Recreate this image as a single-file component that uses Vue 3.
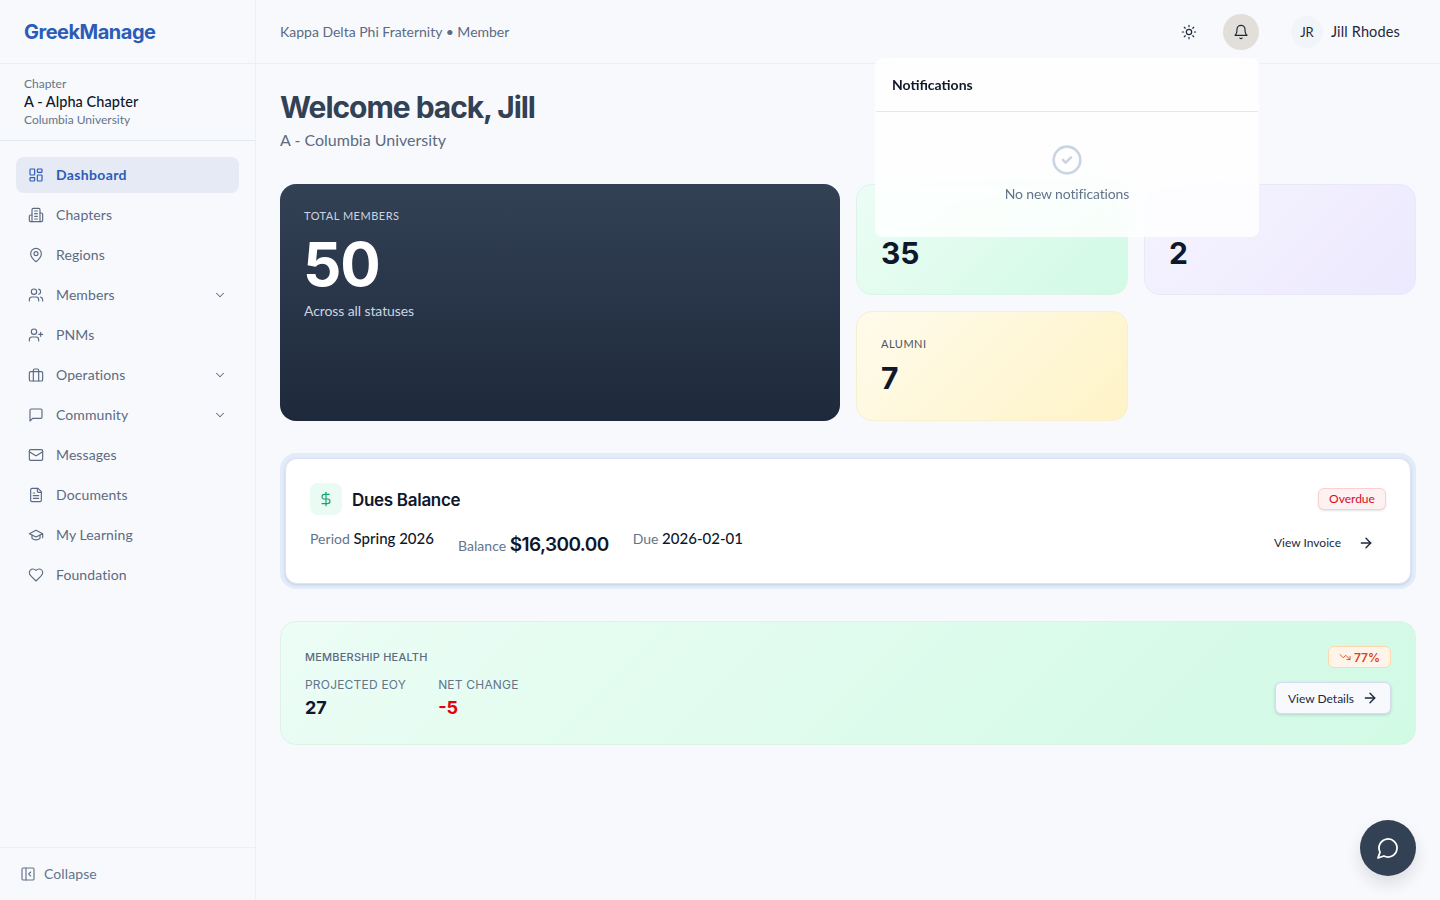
<script setup>
const icons = {
  dashboard: '<rect x="3" y="3" width="7" height="9" rx="1"/><rect x="14" y="3" width="7" height="5" rx="1"/><rect x="14" y="12" width="7" height="9" rx="1"/><rect x="3" y="16" width="7" height="5" rx="1"/>',
  building: '<path d="M6 22V4a2 2 0 0 1 2-2h8a2 2 0 0 1 2 2v18Z"/><path d="M6 12H4a2 2 0 0 0-2 2v6a2 2 0 0 0 2 2h2"/><path d="M18 9h2a2 2 0 0 1 2 2v9a2 2 0 0 1-2 2h-2"/><path d="M10 6h4M10 10h4M10 14h4M10 18h4"/>',
  pin: '<path d="M20 10c0 6-8 12-8 12s-8-6-8-12a8 8 0 0 1 16 0Z"/><circle cx="12" cy="10" r="3"/>',
  users: '<path d="M16 21v-2a4 4 0 0 0-4-4H6a4 4 0 0 0-4 4v2"/><circle cx="9" cy="7" r="4"/><path d="M22 21v-2a4 4 0 0 0-3-3.87"/><path d="M16 3.13a4 4 0 0 1 0 7.75"/>',
  userPlus: '<path d="M16 21v-2a4 4 0 0 0-4-4H6a4 4 0 0 0-4 4v2"/><circle cx="9" cy="7" r="4"/><path d="M19 8v6M22 11h-6"/>',
  briefcase: '<rect x="2" y="7" width="20" height="14" rx="2"/><path d="M16 21V5a2 2 0 0 0-2-2h-4a2 2 0 0 0-2 2v16"/>',
  square: '<path d="M21 15a2 2 0 0 1-2 2H7l-4 4V5a2 2 0 0 1 2-2h14a2 2 0 0 1 2 2z"/>',
  mail: '<rect x="2" y="4" width="20" height="16" rx="2"/><path d="m22 7-8.97 5.7a1.94 1.94 0 0 1-2.06 0L2 7"/>',
  file: '<path d="M15 2H6a2 2 0 0 0-2 2v16a2 2 0 0 0 2 2h12a2 2 0 0 0 2-2V7Z"/><path d="M14 2v4a2 2 0 0 0 2 2h4"/><path d="M10 9H8M16 13H8M16 17H8"/>',
  cap: '<path d="M22 10v6M2 10l10-5 10 5-10 5z"/><path d="M6 12v5c3 3 9 3 12 0v-5"/>',
  heart: '<path d="M19 14c1.49-1.46 3-3.21 3-5.5A5.5 5.5 0 0 0 16.5 3c-1.76 0-3 .5-4.5 2-1.5-1.5-2.74-2-4.5-2A5.5 5.5 0 0 0 2 8.5c0 2.3 1.5 4.05 3 5.5l7 7Z"/>',
  chevron: '<path d="m6 9 6 6 6-6"/>',
  collapse: '<rect x="3" y="3" width="18" height="18" rx="2"/><path d="M9 3v18"/><path d="m16 15-3-3 3-3"/>',
  sun: '<circle cx="12" cy="12" r="4"/><path d="M12 2v2M12 20v2m-7.07-17.07 1.41 1.41m11.32 11.32 1.41 1.41M2 12h2M20 12h2M6.34 17.66l-1.41 1.41M19.07 4.93l-1.41 1.41"/>',
  bell: '<path d="M6 8a6 6 0 0 1 12 0c0 7 3 9 3 9H3s3-2 3-9"/><path d="M10.3 21a1.94 1.94 0 0 0 3.4 0"/>',
  check: '<circle cx="12" cy="12" r="10"/><path d="m9 12 2 2 4-4"/>',
  dollar: '<path d="M12 2v20"/><path d="M17 5H9.5a3.5 3.5 0 0 0 0 7h5a3.5 3.5 0 0 1 0 7H6"/>',
  arrow: '<path d="M5 12h14"/><path d="m12 5 7 7-7 7"/>',
  trend: '<path d="m22 17-8.5-8.5-5 5L2 7"/><path d="M16 17h6v-6"/>',
  bubble: '<path d="M7.9 20A9 9 0 1 0 4 16.1L2 22Z"/>'
}
const nav = [
  { label: 'Dashboard', icon: 'dashboard', active: true },
  { label: 'Chapters', icon: 'building' },
  { label: 'Regions', icon: 'pin' },
  { label: 'Members', icon: 'users', more: true },
  { label: 'PNMs', icon: 'userPlus' },
  { label: 'Operations', icon: 'briefcase', more: true },
  { label: 'Community', icon: 'square', more: true },
  { label: 'Messages', icon: 'mail' },
  { label: 'Documents', icon: 'file' },
  { label: 'My Learning', icon: 'cap' },
  { label: 'Foundation', icon: 'heart' }
]
</script>

<template>
  <div class="app">
    <aside class="sidebar">
      <div class="logo">GreekManage</div>
      <div class="chapter">
        <div class="chapter-sub">Chapter</div>
        <div class="chapter-name">A - Alpha Chapter</div>
        <div class="chapter-sub">Columbia University</div>
      </div>
      <nav class="nav">
        <a v-for="item in nav" :key="item.label" class="nav-item" :class="{ active: item.active }">
          <svg class="ic16" viewBox="0 0 24 24" v-html="icons[item.icon]"></svg>
          <span class="nav-label">{{ item.label }}</span>
          <svg v-if="item.more" class="ic16 chev" viewBox="0 0 24 24" v-html="icons.chevron"></svg>
        </a>
      </nav>
      <div class="collapse">
        <svg class="ic16" viewBox="0 0 24 24" v-html="icons.collapse"></svg>
        <span class="collapse-label">Collapse</span>
      </div>
    </aside>

    <div class="page">
      <header class="topbar">
        <div class="crumb">Kappa Delta Phi Fraternity • Member</div>
        <div class="actions">
          <button class="round">
            <svg class="ic16 dark" viewBox="0 0 24 24" v-html="icons.sun"></svg>
          </button>
          <div class="bell-wrap">
            <button class="round open">
              <svg class="ic16 dark" viewBox="0 0 24 24" v-html="icons.bell"></svg>
            </button>
            <div class="popup">
              <div class="popup-head">Notifications</div>
              <div class="popup-body">
                <svg class="ic-check" viewBox="0 0 24 24" v-html="icons.check"></svg>
                <div class="popup-text">No new notifications</div>
              </div>
            </div>
          </div>
          <div class="user">
            <span class="avatar">JR</span>
            <span class="user-name">Jill Rhodes</span>
          </div>
        </div>
      </header>

      <main class="main">
        <h1 class="title">Welcome back, Jill</h1>
        <p class="subtitle">A - Columbia University</p>

        <section class="stats">
          <div class="stat total">
            <div class="stat-label light">TOTAL MEMBERS</div>
            <div class="total-num">50</div>
            <div class="total-note">Across all statuses</div>
          </div>
          <div class="stat green">
            <div class="stat-label"></div>
            <div class="stat-num">35</div>
          </div>
          <div class="stat purple">
            <div class="stat-label"></div>
            <div class="stat-num">2</div>
          </div>
          <div class="stat yellow">
            <div class="stat-label">ALUMNI</div>
            <div class="stat-num">7</div>
          </div>
        </section>

        <section class="dues-ring">
          <div class="dues">
            <div class="dues-top">
              <span class="dollar">
                <svg class="ic16" viewBox="0 0 24 24" v-html="icons.dollar"></svg>
              </span>
              <h2 class="dues-title">Dues Balance</h2>
              <span class="overdue"><span class="overdue-text">Overdue</span></span>
            </div>
            <div class="dues-row">
              <div class="dues-cell"><span class="muted">Period</span> <span class="val">Spring 2026</span></div>
              <div class="dues-cell balance"><span class="muted">Balance</span> <span class="amount">$16,300.00</span></div>
              <div class="dues-cell"><span class="muted">Due</span> <span class="val">2026-02-01</span></div>
              <a class="invoice">
                <span>View Invoice</span>
                <svg class="ic16 dark arrow" viewBox="0 0 24 24" v-html="icons.arrow"></svg>
              </a>
            </div>
          </div>
        </section>

        <section class="health">
          <div class="health-left">
            <div class="health-title">MEMBERSHIP HEALTH</div>
            <div class="health-cols">
              <div>
                <div class="health-label">PROJECTED EOY</div>
                <div class="health-num">27</div>
              </div>
              <div>
                <div class="health-label">NET CHANGE</div>
                <div class="health-num red">-5</div>
              </div>
            </div>
          </div>
          <div class="health-right">
            <span class="pct">
              <svg class="ic12" viewBox="0 0 24 24" v-html="icons.trend"></svg>
              77%
            </span>
            <button class="details">
              <span>View Details</span>
              <svg class="ic16 dark arrow" viewBox="0 0 24 24" v-html="icons.arrow"></svg>
            </button>
          </div>
        </section>
      </main>
    </div>

    <button class="fab">
      <svg class="ic-fab" viewBox="0 0 24 24" v-html="icons.bubble"></svg>
    </button>
  </div>
</template>

<style>
html, body { margin: 0; background: #f8fafc; }
</style>

<style scoped>
.app {
  display: flex;
  height: 900px;
  overflow: hidden;
  background: #f8f9fc;
  color: #0f172a;
  font-family: Lato, "Noto Sans", sans-serif;
}
svg { fill: none; stroke: currentColor; stroke-width: 1.75; stroke-linecap: round; stroke-linejoin: round; flex: none; }
.ic16 { width: 16px; height: 16px; }
.ic12 { width: 12px; height: 12px; }
.dark { color: #1e293b; }
.arrow { stroke-width: 2.1; }

.sidebar {
  width: 256px;
  flex: none;
  box-sizing: border-box;
  border-right: 1px solid #eceff5;
  display: flex;
  flex-direction: column;
}
.logo {
  height: 64px;
  box-sizing: border-box;
  padding-left: 24px;
  display: flex;
  align-items: center;
  border-bottom: 1px solid #e9edf4;
  color: #2b5cb8;
  font: 700 20px Inter, sans-serif;
  letter-spacing: -0.5px;
}
.chapter {
  height: 77px;
  box-sizing: border-box;
  padding: 12px 24px 0;
  border-bottom: 1px solid #e2e8f0;
}
.chapter-sub { font-size: 12px; line-height: 16px; color: #64748b; }
.chapter-name { font-size: 14.5px; line-height: 20px; font-weight: 500; color: #0f172a; letter-spacing: 0.05px; }
.nav { flex: 1; padding: 16px 16px 0; display: flex; flex-direction: column; gap: 4px; }
.nav-item {
  height: 36px;
  border-radius: 8px;
  padding: 0 12px;
  display: flex;
  align-items: center;
  gap: 12px;
  font-size: 14px;
  color: #5b6b82;
  letter-spacing: 0.1px;
}
.nav-item.active { background: #e5eaf5; color: #2b5cb8; font-weight: 700; letter-spacing: 0.35px; }
.nav-label { flex: 1; padding-bottom: 2px; }
.chev { width: 14px; height: 14px; }
.collapse {
  height: 53px;
  box-sizing: border-box;
  border-top: 1px solid #eceff5;
  padding-left: 20px;
  display: flex;
  align-items: center;
  gap: 8px;
  font-size: 14px;
  color: #64748b;
  letter-spacing: 0.1px;
}
.collapse-label { padding-bottom: 2px; }

.page { flex: 1; min-width: 0; display: flex; flex-direction: column; }
.topbar {
  height: 64px;
  flex: none;
  box-sizing: border-box;
  border-bottom: 1px solid #eceff5;
  padding: 0 40px 0 24px;
  display: flex;
  align-items: center;
  justify-content: space-between;
}
.crumb { font-size: 14px; color: #5b6b82; }
.actions { display: flex; align-items: center; gap: 16px; }
.round {
  width: 36px;
  height: 36px;
  padding: 0;
  border: 0;
  border-radius: 50%;
  background: transparent;
  display: flex;
  align-items: center;
  justify-content: center;
}
.round.open { background: #e2dfdb; }
.bell-wrap { position: relative; margin-right: 16px; }
.popup {
  position: absolute;
  top: 44px;
  right: 0;
  width: 384px;
  height: 179px;
  border-radius: 8px;
  background: rgba(255, 255, 255, 0.82);
  backdrop-filter: blur(12px);
  z-index: 10;
}
.popup-head {
  height: 54px;
  box-sizing: border-box;
  margin: 0 1px;
  padding-left: 16px;
  display: flex;
  align-items: center;
  border-bottom: 1px solid #e2e8f0;
  font-size: 14px;
  font-weight: 700;
  color: #0f172a;
}
.popup-body {
  padding-top: 32px;
  display: flex;
  flex-direction: column;
  align-items: center;
  gap: 9px;
  font-size: 14px;
  color: #64748b;
}
.popup-text { letter-spacing: -0.15px; }
.ic-check { width: 32px; height: 32px; color: #cbd5e1; stroke-width: 2; }
.user { display: flex; align-items: center; gap: 8px; }
.avatar {
  width: 32px;
  height: 32px;
  border-radius: 50%;
  background: #f1f5f9;
  display: flex;
  align-items: center;
  justify-content: center;
  font-size: 13px;
  color: #1e293b;
}
.user-name { font-size: 14.5px; color: #1e293b; min-width: 69px; letter-spacing: 0.15px; }

.main { flex: 1; padding: 24px; min-height: 0; }
.title {
  margin: 0;
  font: 700 30px/38px Inter, sans-serif;
  letter-spacing: -1.05px;
  color: #334155;
}
.subtitle { margin: 2px 0 0; font-size: 16px; line-height: 24px; color: #5b6b82; }

.stats {
  margin-top: 32px;
  display: grid;
  grid-template-columns: repeat(4, 1fr);
  grid-template-rows: 111px 110px;
  gap: 16px;
}
.stat {
  box-sizing: border-box;
  border-radius: 16px;
  border: 1px solid transparent;
  padding: 24px;
}
.total {
  grid-row: span 2;
  grid-column: span 2;
  border: 0;
  background: linear-gradient(180deg, #334155, #1e293b);
  color: #fff;
}
.stat-label { height: 16px; font-size: 11px; line-height: 16px; letter-spacing: 0.5px; color: #475569; }
.stat-label.light { color: #cbd5e1; }
.total-num { margin-top: 4px; margin-left: -1px; font: 700 60px/72px Inter, sans-serif; letter-spacing: -1px; }
.total-note { margin-top: 1px; font-size: 14px; line-height: 20px; color: #cbd5e1; letter-spacing: -0.1px; }
.stat-num { margin-top: 8px; font: 700 30px/36px Inter, sans-serif; color: #0f172a; }
.green { background: linear-gradient(135deg, #ecfdf5, #d1fae5); border-color: #dcf5e8; }
.purple { background: linear-gradient(135deg, #f5f3ff, #ede9fe); border-color: #ebe7fb; }
.yellow { background: linear-gradient(135deg, #fffbeb, #fef3c7); border-color: #f8efcf; }
.green, .purple { padding-top: 26px; }

.dues-ring {
  margin-top: 32px;
  padding: 5px;
  border-radius: 16px;
  background: #e3ecfa;
}
.dues {
  box-sizing: border-box;
  height: 126px;
  border: 1px solid #dbe4f2;
  border-radius: 12px;
  background: #fff;
  box-shadow: 0 1px 3px rgba(100, 116, 139, 0.25);
  padding: 24px 24px 0;
}
.dues-top { display: flex; align-items: center; }
.dollar {
  width: 32px;
  height: 32px;
  border-radius: 8px;
  background: #e9fbf3;
  color: #10a56f;
  display: flex;
  align-items: center;
  justify-content: center;
}
.dues-title { margin: 2px 0 0 10px; flex: 1; font: 600 17px Inter, sans-serif; letter-spacing: -0.3px; color: #0f172a; }
.overdue {
  box-sizing: border-box;
  width: 68px;
  height: 22px;
  border-radius: 6px;
  border: 1px solid #fbd0d0;
  background: #fef1f1;
  color: #d70a1f;
  font-size: 12px;
  display: flex;
  align-items: center;
  justify-content: center;
  box-shadow: 0 1px 2px rgba(100, 116, 139, 0.2);
}
.overdue-text { padding-bottom: 2px; }
.dues-row { margin-top: 11px; display: flex; align-items: flex-start; gap: 24px; }
.dues-cell { font-size: 14px; line-height: 24px; white-space: nowrap; }
.balance { margin-top: 7px; }
.muted { color: #64748b; letter-spacing: 0.05px; }
.val { font-size: 15px; color: #0f172a; font-weight: 500; }
.amount { font: 600 19px Inter, sans-serif; color: #0f172a; letter-spacing: -0.6px; }
.invoice {
  margin: 5px 12px 0 auto;
  display: flex;
  align-items: center;
  gap: 17px;
  font-size: 12px;
  line-height: 24px;
  color: #1e293b;
}

.health {
  margin-top: 32px;
  height: 124px;
  box-sizing: border-box;
  border: 1px solid #dcf3e6;
  border-radius: 16px;
  padding: 24px;
  background: linear-gradient(135deg, #ecfdf5, #d1fae5);
  display: flex;
  justify-content: space-between;
}
.health-title { margin-top: 3px; font: 500 11px/16px Inter, sans-serif; letter-spacing: 0.2px; color: #5b6b82; }
.health-cols { margin-top: 12px; display: flex; gap: 32px; }
.health-label { font: 400 12px/16px Inter, sans-serif; letter-spacing: 0.2px; color: #64748b; }
.health-num { margin-top: 1px; font: 700 18px/28px Inter, sans-serif; color: #0f172a; }
.health-num.red { color: #e7000b; }
.health-right { display: flex; flex-direction: column; align-items: flex-end; gap: 14px; }
.pct {
  box-sizing: border-box;
  width: 63px;
  height: 22px;
  border: 1px solid #fed7aa;
  border-radius: 6px;
  background: #fff4ea;
  color: #d9421a;
  font: 600 12px Inter, sans-serif;
  display: flex;
  align-items: center;
  justify-content: center;
  gap: 3px;
}
.details {
  box-sizing: border-box;
  width: 116px;
  height: 32px;
  border: 1px solid #d6dcec;
  border-radius: 6px;
  background: #f8f9fc;
  box-shadow: 0 1px 3px rgba(100, 116, 139, 0.3);
  font: 400 12px Lato, sans-serif;
  color: #1e293b;
  display: flex;
  align-items: center;
  justify-content: center;
  gap: 8px;
  padding: 0;
}
.fab {
  position: fixed;
  right: 24px;
  bottom: 24px;
  width: 56px;
  height: 56px;
  border: 0;
  padding: 0;
  border-radius: 50%;
  background: #334155;
  color: #fff;
  box-shadow: 0 8px 16px rgba(15, 23, 42, 0.12);
  display: flex;
  align-items: center;
  justify-content: center;
}
.ic-fab { width: 24px; height: 24px; stroke-width: 1.8; }
</style>
